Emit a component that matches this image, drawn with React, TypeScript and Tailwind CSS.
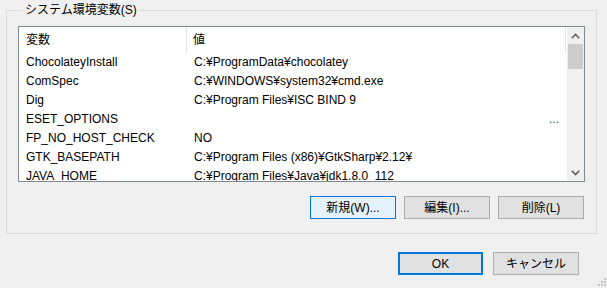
const rows: [string, string, boolean?][] = [
  ["ChocolateyInstall", "C:¥ProgramData¥chocolatey"],
  ["ComSpec", "C:¥WINDOWS¥system32¥cmd.exe"],
  ["Dig", "C:¥Program Files¥ISC BIND 9"],
  ["ESET_OPTIONS", "", true],
  ["FP_NO_HOST_CHECK", "NO"],
  ["GTK_BASEPATH", "C:¥Program Files (x86)¥GtkSharp¥2.12¥"],
  ["JAVA_HOME", "C:¥Program Files¥Java¥jdk1.8.0_112"],
];

const font = { fontFamily: '"Liberation Sans", "Noto Sans CJK JP", sans-serif' };

function Chevron({ down }: { down?: boolean }) {
  return (
    <svg width="9" height="6" viewBox="0 0 9 6" className={down ? "rotate-180" : ""}>
      <path d="M0.8 5.2 L4.5 1.5 L8.2 5.2" fill="none" stroke="#606060" strokeWidth="1.6" />
    </svg>
  );
}

export default function App() {
  return (
    <div
      className="relative h-[288px] w-[607px] overflow-hidden bg-[#f0f0f0] text-[12px] text-black"
      style={font}
    >
      <fieldset className="ml-[6px] mt-[2px] h-[232px] w-[591px] border border-[#dcdcdc] px-[11px] pt-[8px]">
        <legend className="ml-[5px] px-[2px] leading-[16px]">システム環境変数(S)</legend>

        <div className="flex h-[156px] w-[567px] border border-[#828790] bg-white">
          <div className="flex w-[548px] flex-col overflow-hidden">
            <div className="flex h-[26px] shrink-0 items-center">
              <div className="flex h-full w-[168px] items-center border-r border-[#e5e5e5] pl-[7px]">変数</div>
              <div className="flex h-full flex-1 items-center border-r border-[#e5e5e5] pl-[6px]">値</div>
              <div className="w-[1px]" />
            </div>
            {rows.map(([name, value, more]) => (
              <div key={name} className="flex h-[19px] shrink-0 items-center">
                <div className="w-[168px] pl-[7px] leading-[19px]">{name}</div>
                <div className="flex flex-1 justify-between pl-[7px] pr-[8px] leading-[19px]">
                  <span>{value}</span>
                  {more && <span className="text-[#1a3d8f]">...</span>}
                </div>
              </div>
            ))}
          </div>
          <div className="flex w-[17px] flex-col bg-[#f0f0f0]">
            <div className="flex h-[17px] items-center justify-center">
              <Chevron />
            </div>
            <div className="mx-[1px] h-[25px] bg-[#cdcdcd]" />
            <div className="flex-1" />
            <div className="flex h-[17px] items-center justify-center">
              <Chevron down />
            </div>
          </div>
        </div>

        <div className="mt-[14px] flex justify-end gap-[8px] pr-[1px]">
          <button className="h-[23px] w-[86px] border border-[#0078d7] bg-[#e5f1fb]">新規(W)...</button>
          <button className="h-[23px] w-[86px] border border-[#adadad] bg-[#e1e1e1]">編集(I)...</button>
          <button className="h-[23px] w-[86px] border border-[#adadad] bg-[#e1e1e1]">削除(L)</button>
        </div>
      </fieldset>

      <div className="mt-[18px] flex justify-end gap-[10px] pr-[28px]">
        <button className="h-[23px] w-[85px] border-2 border-[#0078d7] bg-[#e1e1e1]">OK</button>
        <button className="h-[23px] w-[86px] border border-[#adadad] bg-[#e1e1e1]">キャンセル</button>
      </div>

      <svg className="absolute bottom-[1px] right-[1px]" width="10" height="10" viewBox="0 0 10 10">
        {[
          [8, 0], [8, 3], [5, 3], [8, 6], [5, 6], [2, 6],
        ].map(([x, y]) => (
          <rect key={`${x}-${y}`} x={x} y={y + 1} width="2" height="2" fill="#c4c4c4" />
        ))}
      </svg>
    </div>
  );
}
